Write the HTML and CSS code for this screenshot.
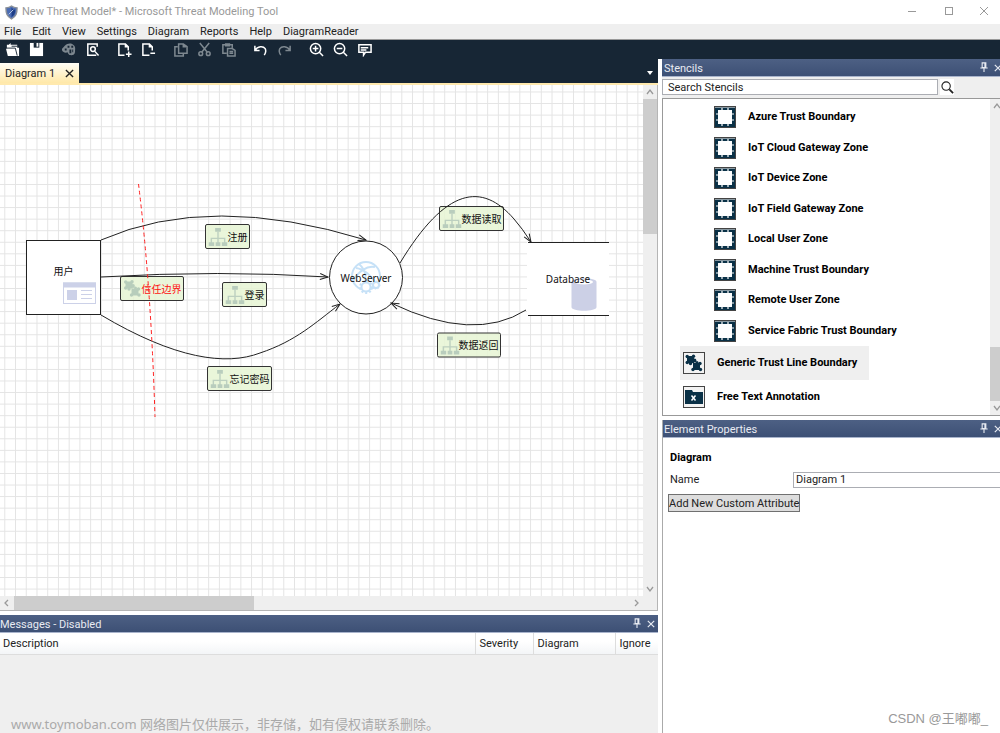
FILE: index.html
```html
<!DOCTYPE html>
<html lang="en">
<head>
<meta charset="utf-8">
<title>New Threat Model* - Microsoft Threat Modeling Tool</title>
<link rel="stylesheet" href="styles.css">
</head>
<body>
<svg class="defs" aria-hidden="true">
  <symbol id="pin" viewBox="0 0 8 12"><path d="M2 1h4v5H2zM5 1v5M0 6.5h8M4 7v4" fill="none" stroke="currentColor" stroke-width="1.2"/></symbol>
  <symbol id="cross" viewBox="0 0 10 10"><path d="M1 1l8 8M9 1l-8 8" fill="none" stroke="currentColor" stroke-width="1.5"/></symbol>
  <symbol id="boundary" viewBox="0 0 22 22">
    <rect width="22" height="22" fill="#0a3147"/><rect x="4" y="4" width="14" height="14" fill="#fff"/>
    <path d="M8 2v3M14 2v3M8 17v3M14 17v3M2 8h3M2 14h3M17 8h3M17 14h3" stroke="#fff" stroke-width="1.200"/>
    <path d="M1 1.500h20" stroke="#8a9aa3"/>
    <rect x=".5" y=".5" width="21" height="21" fill="none" stroke="#444"/>
  </symbol>
  <symbol id="pieces" viewBox="0 0 18 18">
    <g fill="currentColor"><rect x="2" y="2" width="7" height="7"/><rect x="8" y="9" width="7" height="7"/><circle cx="2.200" cy="2.500" r="1.700"/><circle cx="2.200" cy="8.500" r="1.700"/><circle cx="8.500" cy="2.200" r="1.700"/><circle cx="9.500" cy="6.500" r="1.900"/><circle cx="5.500" cy="9.500" r="1.700"/><circle cx="8" cy="15.500" r="1.700"/><circle cx="15" cy="9.500" r="1.700"/><circle cx="15.500" cy="15.500" r="1.700"/><circle cx="12" cy="8.500" r="1.500"/></g>
  </symbol>
  <symbol id="tree" viewBox="0 0 20 20">
    <path d="M10 5v12M3 17v-5h14v5" fill="none" stroke="#bdd0c0" stroke-width="1.500"/>
    <path d="M7 1h6v4H7zM0 16h6v4H0zM7.500 16h5v4h-5zM14 16h6v4h-6z" fill="#b9cdbd"/>
  </symbol>
  <symbol id="up" viewBox="0 0 10 10"><path d="M2 7l3-4 3 4" fill="none" stroke="#999" stroke-width="1.300"/></symbol>
  <symbol id="down" viewBox="0 0 10 10"><path d="M2 3l3 4 3-4" fill="none" stroke="#999" stroke-width="1.300"/></symbol>
  <symbol id="left" viewBox="0 0 10 10"><path d="M6 2L3 5l3 3" fill="none" stroke="#999" stroke-width="1.300"/></symbol>
  <symbol id="right" viewBox="0 0 10 10"><path d="M4 2l3 3-3 3" fill="none" stroke="#999" stroke-width="1.300"/></symbol>
</svg>
<header class="titlebar">
  <svg class="shield" viewBox="0 0 14 16"><path d="M7 1c2 1.500 4 2 6 2 0 6-1 9-6 12C2 12 1 9 1 3c2 0 4-.5 6-2z" fill="#4a6cb4" stroke="#8a9099" stroke-width="1.500"/><path d="M7 3v10c3-2 4-4 4-8-2 0-3-1-4-2z" fill="#1e3e87"/><path d="M4 10l5-5" stroke="#c5d4ec"/></svg>
  <h1 class="title">New Threat Model* - Microsoft Threat Modeling Tool</h1>
  <div class="window-buttons">
    <button aria-label="Minimize"><svg viewBox="0 0 10 10"><path d="M1 5.500h8" stroke="#999"/></svg></button>
    <button aria-label="Maximize"><svg viewBox="0 0 10 10"><rect x="1.500" y="1.500" width="7" height="7" fill="none" stroke="#999"/></svg></button>
    <button aria-label="Close"><svg viewBox="0 0 10 10"><path d="M1 1l8 8M9 1l-8 8" stroke="#999"/></svg></button>
  </div>
</header>
<nav class="menubar">
  <button>File</button><button>Edit</button><button>View</button><button>Settings</button><button>Diagram</button><button>Reports</button><button>Help</button><button>DiagramReader</button>
</nav>
<div class="toolbar" role="toolbar">
  <div class="tools">
    <button aria-label="Open"><svg viewBox="0 0 16 16"><path d="M2 5V3h2l2-2v2h7v3h2v9H3L1 7h1z" fill="#fff"/><path d="M1 6.500h10l2 8M7 4.500h6" stroke="#172635" fill="none"/></svg></button>
    <button aria-label="Save"><svg viewBox="0 0 16 16"><path d="M1 1h14v14H1z" fill="#fff"/><path d="M5 1h6v5H5z" fill="#172635"/><path d="M8 1h2v4H8z" fill="#fff"/></svg></button>
  </div>
  <div class="tools">
    <button class="dim" aria-label="Analysis view"><svg viewBox="0 0 16 16"><path d="M1 8c0-2 2-2 3-4 3-3 7-3 9-1 3 2 2 5 2 7 0 3-2 4-4 4-3 0-3-1-4-3-2 1-6 0-6-3z" fill="currentColor"/><path d="M7 4h2v2H7zM11 4h2v2h-2zM4 7h2v2H4zM9 8h2v4H9zM12 8h1v3h-1z" fill="#172635"/></svg></button>
    <button aria-label="Find"><svg viewBox="0 0 16 16"><path d="M13 5V2H3v12h9" class="ln"/><circle cx="8.500" cy="7.500" r="2.500" class="ln"/><path d="M10.500 10l4 4.500" class="ln"/></svg></button>
  </div>
  <div class="tools">
    <button aria-label="Add diagram"><svg viewBox="0 0 16 16"><path d="M8 14H2V2h7l3 3v4M9 2v3h3M12.500 10v6M9.500 13h6" class="ln"/></svg></button>
    <button aria-label="Delete diagram"><svg viewBox="0 0 16 16"><path d="M9 14H2V2h7l3 3v4M9 2v3h3M10 12h5" class="ln"/></svg></button>
  </div>
  <div class="tools">
    <button class="dim" aria-label="Copy"><svg viewBox="0 0 16 16"><path d="M6 2h5l4 3v7H6zM11 2v3h3M5 5H2v10h9v-3" class="ln"/></svg></button>
    <button class="dim" aria-label="Cut"><svg viewBox="0 0 16 16"><path d="M3 1l8 10M13 1L5 11" class="ln"/><circle cx="4" cy="12.500" r="2" class="ln"/><circle cx="12" cy="12.500" r="2" class="ln"/></svg></button>
    <button class="dim" aria-label="Paste"><svg viewBox="0 0 16 16"><path d="M6 12H2V3h10v3M5 2h4v2H5zM7 7h5l3 2v6H7zM9 10h4M9 12h4" class="ln"/></svg></button>
  </div>
  <div class="tools">
    <button aria-label="Undo"><svg viewBox="0 0 16 16"><path d="M2 4v5h5M2 9c3-5 9-5 11-2 1 2 1 4-1 7" class="ln"/></svg></button>
    <button class="dim" aria-label="Redo"><svg viewBox="0 0 16 16"><path d="M14 4v5H9M14 9C11 4 5 4 3 7c-1 2-1 4 1 7" class="ln"/></svg></button>
  </div>
  <div class="tools">
    <button aria-label="Zoom in"><svg viewBox="0 0 16 16"><circle cx="7" cy="7" r="5.500" class="ln"/><path d="M11 11l4 4M4 7h6M7 4v6" class="ln"/></svg></button>
    <button aria-label="Zoom out"><svg viewBox="0 0 16 16"><circle cx="7" cy="7" r="5.500" class="ln"/><path d="M11 11l4 4M4 7h6" class="ln"/></svg></button>
    <button aria-label="Feedback"><svg viewBox="0 0 16 16"><path d="M2 3h13v8H9l-2 3v-3H2zM4 6h8M4 8.500h6" class="ln"/></svg></button>
  </div>
</div>
<div class="workspace">
  <main class="left">
    <div class="tabs">
      <div class="tab"><span>Diagram 1</span><button aria-label="Close tab"><svg viewBox="0 0 10 10"><use href="#cross"/></svg></button></div>
      <button class="tab-list" aria-label="Open diagrams"><svg viewBox="0 0 6 4"><path d="M0 0h6L3 4z" fill="#fff"/></svg></button>
    </div>
    <div class="canvas-frame">
      <svg class="canvas" role="img" aria-label="Diagram 1">
        <defs>
          <pattern id="grid" x="4.300" y="6.500" width="10.730" height="11.560" patternUnits="userSpaceOnUse"><path d="M0 .5h11M.5 0v12" stroke="#e4e4e4" fill="none"/></pattern>
          <marker id="arrow" viewBox="0 0 10 8" refX="9" refY="4" markerWidth="10" markerHeight="8" orient="auto" markerUnits="userSpaceOnUse"><path d="M1 1l8 3-8 3" fill="none" stroke="#222"/></marker>
        </defs>
        <rect width="100%" height="100%" fill="url(#grid)"/>
        <g transform="translate(0 -85)">
          <rect x="26.500" y="240.500" width="74" height="74" class="shape"/>
          <g fill="none" stroke="#ccd1e8"><rect x="63.500" y="283" width="32" height="20.500" fill="#fff"/><path d="M63 285h33" stroke-width="5"/><path d="M67 295h10" stroke-width="10"/><path d="M81 290.500h11M81 294.500h11M81 298.500h11" stroke-width="1.200"/></g>
          <text x="63.500" y="275" class="label">用户</text>
          <circle cx="366" cy="277.500" r="36.500" class="shape"/>
          <g fill="none" stroke="#c6e1f7" stroke-width="2"><circle cx="366" cy="276" r="14"/><path d="M356 268c8 1 16 8 21 17M353 281c5-9 14-16 22-14M359 264c8 7 8 16 3 24"/><circle cx="366" cy="287" r="4.500" fill="#fff"/><circle cx="366" cy="287" r="6" stroke-dasharray="2 2"/><circle cx="376" cy="285" r="3" fill="#fff"/><circle cx="376" cy="285" r="4" stroke-dasharray="1.500 1.500" stroke-width="1"/></g>
          <text x="366" y="282" class="label">WebServer</text>
          <rect x="527" y="242" width="82" height="74" fill="#fff"/>
          <path d="M528 242.500h81M528 315.500h81" stroke="#222"/>
          <path d="M571.500 282v25c0 5 25 5 25 0v-25c0-5-25-5-25 0z" fill="#ccd0e6"/><ellipse cx="584" cy="282" rx="9" ry="2.500" fill="#fff"/>
          <text x="568" y="283" class="label">Database</text>

          <g transform="translate(205.500 224.500)"><rect width="44" height="24" rx="1.500" class="tag"/><use href="#tree" x="3" y="2" width="19" height="20"/><text x="32" y="16" class="label">注册</text></g>
          <g transform="translate(222.500 282.500)"><rect width="44" height="24" rx="1.500" class="tag"/><use href="#tree" x="3" y="2" width="19" height="20"/><text x="32" y="16" class="label">登录</text></g>
          <g transform="translate(207.500 366.500)"><rect width="64" height="24" rx="1.500" class="tag"/><use href="#tree" x="3" y="2" width="19" height="20"/><text x="42" y="16" class="label">忘记密码</text></g>
          <g transform="translate(439.500 206.500)"><rect width="64" height="24" rx="1.500" class="tag"/><use href="#tree" x="3" y="2" width="19" height="20"/><text x="42" y="16" class="label">数据读取</text></g>
          <g transform="translate(437.500 333)"><rect width="63" height="24" rx="1.500" class="tag"/><use href="#tree" x="3" y="2" width="19" height="20"/><text x="41" y="16" class="label">数据返回</text></g>
          <g transform="translate(120.500 276.500)"><rect width="63" height="24" rx="1.500" class="tag"/><use href="#pieces" x="3" y="3" width="18" height="18" color="#b7cdbb"/><text x="41" y="16" class="label red">信任边界</text></g>
          <path d="M101 240Q210 192 366 240" class="flow"/>
          <path d="M101 277Q220 270 328 277" class="flow"/>
          <path d="M101 315C175 359 226 366 260 353C296 341 315 323 340 304" class="flow"/>
          <path d="M400 263C446 187 482 182 514 219Q522 228 531 242" class="flow"/>
          <path d="M526 310Q474 343 391 303" class="flow"/>
          <path d="M138.500 184Q151 285 155 417" fill="none" stroke="#f22" stroke-dasharray="4 3"/>
        </g>
      </svg>
      <div class="scroll vertical"><button aria-label="Scroll up"><svg><use href="#up"/></svg></button><div class="track"><div class="thumb"></div></div><button aria-label="Scroll down"><svg><use href="#down"/></svg></button></div>
      <div class="scroll horizontal"><button aria-label="Scroll left"><svg><use href="#left"/></svg></button><div class="track"><div class="thumb"></div></div><button aria-label="Scroll right"><svg><use href="#right"/></svg></button></div>
    </div>
    <section class="messages">
      <div class="panel-head"><h2>Messages - Disabled</h2><button aria-label="Pin"><svg class="pin"><use href="#pin"/></svg></button><button aria-label="Close"><svg class="cross"><use href="#cross"/></svg></button></div>
      <table><thead><tr><th>Description</th><th class="c-sev">Severity</th><th class="c-dia">Diagram</th><th class="c-ign">Ignore</th></tr></thead></table>
      <p class="notice">www.toymoban.com 网络图片仅供展示，非存储，如有侵权请联系删除。</p>
    </section>
  </main>
  <aside class="right">
    <section class="stencils">
      <div class="panel-head"><h2>Stencils</h2><button aria-label="Pin"><svg class="pin"><use href="#pin"/></svg></button><button aria-label="Close"><svg class="cross"><use href="#cross"/></svg></button></div>
      <div class="search"><input type="text" value="Search Stencils" aria-label="Search Stencils"><button aria-label="Search"><svg viewBox="0 0 14 14"><circle cx="5.500" cy="5.500" r="4.500" fill="none" stroke="#222" stroke-width="1.200"/><path d="M9 9l4 4" stroke="#222" stroke-width="2"/></svg></button></div>
      <div class="stencil-frame">
        <div class="stencil-list">
          <ul class="zones">
            <li><svg><use href="#boundary"/></svg>Azure Trust Boundary</li>
            <li><svg><use href="#boundary"/></svg>IoT Cloud Gateway Zone</li>
            <li><svg><use href="#boundary"/></svg>IoT Device Zone</li>
            <li><svg><use href="#boundary"/></svg>IoT Field Gateway Zone</li>
            <li><svg><use href="#boundary"/></svg>Local User Zone</li>
            <li><svg><use href="#boundary"/></svg>Machine Trust Boundary</li>
            <li><svg><use href="#boundary"/></svg>Remote User Zone</li>
            <li><svg><use href="#boundary"/></svg>Service Fabric Trust Boundary</li>
          </ul>
          <ul class="generic">
            <li class="selected"><svg viewBox="0 0 22 22"><rect x=".5" y=".5" width="21" height="21" fill="#f3f3f3" stroke="#444"/><use href="#pieces" x="2" y="2" width="18" height="18" color="#0a3147"/></svg>Generic Trust Line Boundary</li>
            <li><svg viewBox="0 0 22 22"><rect x=".5" y=".5" width="21" height="21" fill="#f3f3f3" stroke="#444"/><path d="M2 4h7l1 2h10v12H2z" fill="#0a3147"/><path d="M8.500 9.500l4 5M12.500 9.500l-4 5" stroke="#fff" stroke-width="1.500"/></svg>Free Text Annotation</li>
          </ul>
        </div>
        <div class="scroll vertical stencil-scroll"><button aria-label="Scroll up"><svg><use href="#up"/></svg></button><div class="track"><div class="thumb"></div></div><button aria-label="Scroll down"><svg><use href="#down"/></svg></button></div>
      </div>
    </section>
    <section class="properties">
      <div class="panel-head"><h2>Element Properties</h2><button aria-label="Pin"><svg class="pin"><use href="#pin"/></svg></button><button aria-label="Close"><svg class="cross"><use href="#cross"/></svg></button></div>
      <div class="form">
        <h3>Diagram</h3>
        <div class="field"><label for="name">Name</label><input id="name" type="text" value="Diagram 1"></div>
        <button class="add">Add New Custom Attribute</button>
      </div>
      <p class="credit">CSDN @王嘟嘟_</p>
    </section>
  </aside>
</div>
</body>
</html>
```
FILE: styles.css
```css
* { box-sizing: border-box; }
body, h1, h2, h3, p, ul { margin: 0; padding: 0; }
body {
  display: flex;
  flex-direction: column;
  height: 100vh;
  overflow: hidden;
  background: #fff;
  color: #222;
  font: 11px/16px Roboto, "Noto Sans CJK SC", sans-serif;
}
h1, h2, h3 { font-size: 11px; font-weight: 400; }
ul { list-style: none; }
button, input { font: inherit; color: inherit; }
button { display: flex; align-items: center; justify-content: center; padding: 0; border: 0; background: none; }
svg { display: block; flex: none; }
.defs { position: absolute; width: 0; height: 0; }

.titlebar { display: flex; align-items: center; height: 24px; padding-left: 5px; gap: 4px; color: #999; }
.shield { width: 13px; height: 15px; }
.title { flex: 1; }
.window-buttons { display: flex; margin-top: -2px; }
.window-buttons button { width: 37px; height: 22px; }
.window-buttons button:last-child { width: 33px; }
.window-buttons svg { width: 10px; height: 10px; }

.menubar { display: flex; gap: 11px; height: 16px; padding: 1px 0 0 4px; background: #efefef; border-bottom: 1px solid #999; }
.toolbar { display: flex; gap: 8px; height: 19px; background: #172635; color: #fff; }
.tools { display: flex; }
.tools button { width: 24px; }
.tools svg { width: 15px; height: 15px; }
.ln { fill: none; stroke: currentColor; stroke-width: 1.6; }
.dim { color: #7e8890; }

.workspace { flex: 1; display: flex; gap: 4px; min-height: 0; }
.left { flex: 1; display: flex; flex-direction: column; min-width: 0; }
.right { flex: none; width: 338px; display: flex; flex-direction: column; }

.tabs { display: flex; justify-content: space-between; align-items: flex-end; height: 26px; background: #172635; border-bottom: 2px solid #ffe9ae; }
.tab { display: flex; align-items: center; gap: 10px; height: 20px; padding: 1px 5px 0; background: linear-gradient(#fffdf6, #ffe8a8); }
.tab svg { width: 9px; height: 9px; }
.tab-list { width: 16px; height: 20px; }
.tab-list svg { width: 6px; height: 4px; }

.canvas-frame { flex: 1; display: grid; grid-template-columns: 1fr 14px; grid-template-rows: 1fr 14px; min-height: 0; border: solid #b5b5b5; border-width: 0 1px 1px 0; background: #efefef; }
.canvas { width: 100%; height: 100%; background: #fff; }
.shape { fill: #fff; stroke: #222; }
.tag { fill: #e6f5d4; fill-opacity: .85; stroke: #333; }
.label { font: 10px "Noto Sans", "Noto Sans CJK SC", sans-serif; text-anchor: middle; fill: #111; }
.red { fill: #f11; }
.flow { fill: none; stroke: #222; marker-end: url(#arrow); }

.scroll { display: flex; background: #efefef; }
.scroll button { flex: none; width: 14px; height: 14px; }
.scroll svg { width: 10px; height: 10px; }
.track { flex: 1; display: flex; }
.thumb { background: #cdcdcd; }
.vertical, .vertical .track { flex-direction: column; }
.vertical .thumb { height: 28%; }
.horizontal .thumb { width: 39%; }

.messages { height: 118px; background: #efefef; }
.canvas-frame + .messages { margin-top: 4px; }
.panel-head { display: flex; align-items: center; gap: 6px; height: 18px; padding: 0 2px; background: linear-gradient(#4d6084, #3d5075); border-bottom: 1px solid #a9b4cc; color: #e8ebf2; }
.panel-head h2 { flex: 1; padding-top: 2px; }
.pin { width: 8px; height: 11px; }
.cross { width: 8px; height: 8px; }
.messages .panel-head { padding: 0 3px 0 0; }
.right .panel-head { padding-right: 0; margin-right: -2px; }

table { width: 100%; border-collapse: collapse; table-layout: fixed; background: linear-gradient(#fff 40%, #f3f5f7); }
th { height: 21px; padding: 2px 4px 0; text-align: left; font-weight: 400; border: solid #ddd; border-width: 0 0 1px 1px; }
th:first-child { padding-left: 3px; border-left: 0; }
.c-sev { width: 58px; }
.c-dia { width: 82px; }
.c-ign { width: 43px; }
.notice { padding: 59px 11px 0; font: 13px/20px "Noto Sans", "Noto Sans CJK SC", sans-serif; color: #aaa; white-space: nowrap; }

.stencils { display: flex; flex-direction: column; height: 361px; }
.search { display: flex; gap: 2px; height: 21px; padding: 2px 0 3px; background: #efefef; }
.search input { width: 276px; padding: 1px 5px 0; border: 1px solid #abadb3; background: #fff; color: #222; }
.search button { width: 14px; background: #fff; }
.search svg { width: 13px; height: 13px; }
.stencil-frame { flex: none; display: flex; height: 318px; border: solid #999; border-width: 1px 0 1px 1px; overflow: hidden; }
.stencil-list { flex: 1; padding-top: 3px; font-weight: 700; color: #000; }
.stencil-list svg { width: 22px; height: 22px; }
.zones { display: grid; grid-auto-rows: 1fr; height: 244px; padding-left: 51px; }
.zones li, .generic li { display: flex; align-items: center; gap: 12px; white-space: nowrap; }
.generic { display: flex; flex-direction: column; align-items: flex-start; padding-left: 17px; }
.generic li { height: 34px; padding: 0 12px 0 3px; }
.selected { background: #efefef; }
.stencil-scroll { margin-right: -4px; width: 14px; }
.stencil-scroll .track { justify-content: flex-end; }
.stencil-scroll .thumb { height: 54px; }

.properties { flex: 1; display: flex; flex-direction: column; border-left: 1px solid #aaa; }
.properties .panel-head { padding-left: 1px; }
.form { flex: 1; display: flex; flex-direction: column; align-items: flex-start; padding: 12px 0 0 5px; color: #222; }
h3 { padding: 0 2px; font-weight: 700; color: #000; }
.field { display: flex; align-items: center; width: 100%; margin: 5px 0 6px; padding-left: 2px; }
.field label { flex: none; width: 123px; padding-top: 1px; }
.field input { flex: 1; min-width: 0; height: 16px; padding: 1px 2px 0; border: 1px solid #abadb3; border-right: 0; }
.add { height: 18px; padding: 1px 0 0; border: 1px solid #707070; background: #ddd; white-space: nowrap; }
.credit { padding: 0 12px 4px; text-align: right; font: 13px/20px "Liberation Sans", "Noto Sans CJK SC", sans-serif; color: #999; }
```
